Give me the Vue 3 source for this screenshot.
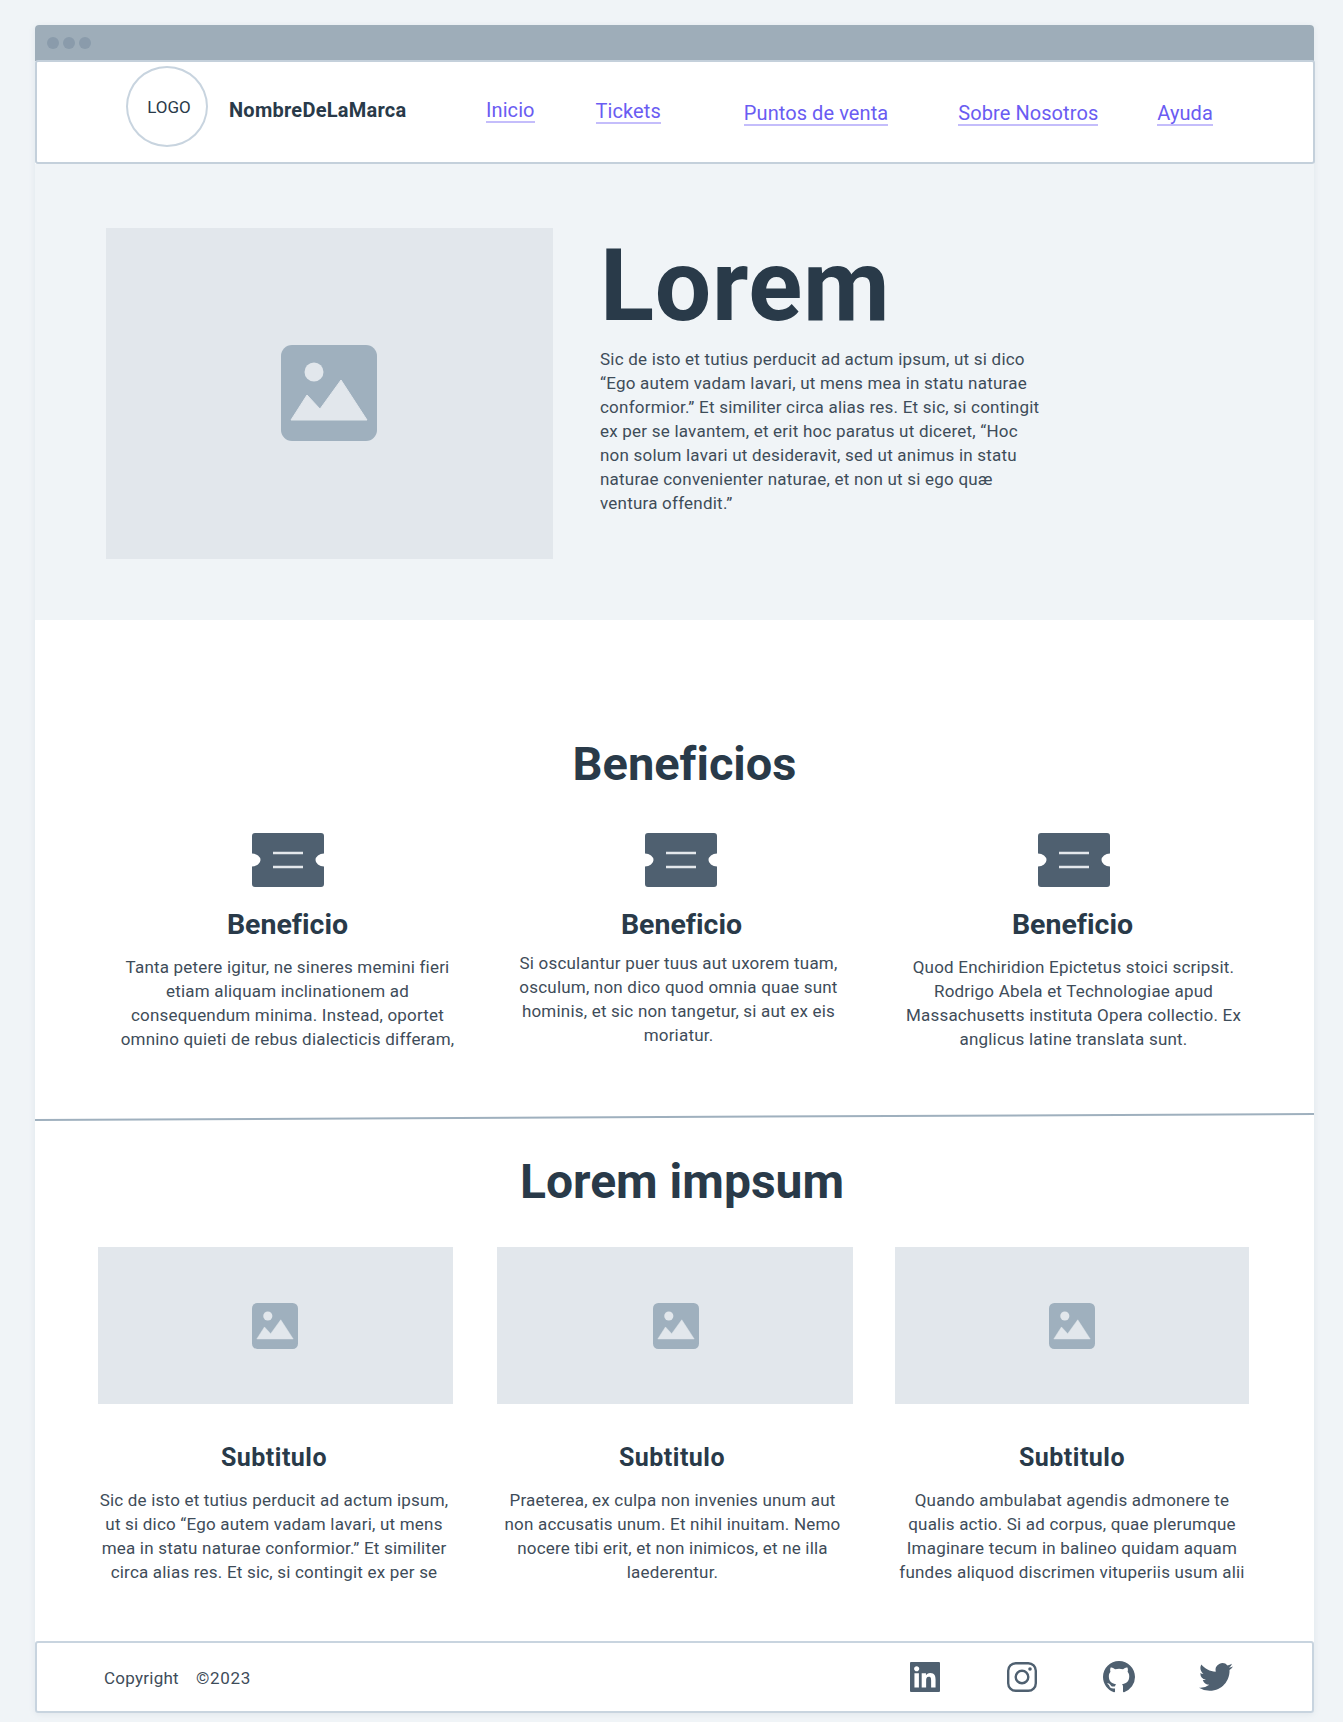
<template>
  <div class="page">
    <div class="window">
      <div class="titlebar">
        <span class="dot"></span>
        <span class="dot"></span>
        <span class="dot"></span>
      </div>

      <header class="nav">
        <div class="logo"><span>LOGO</span></div>
        <div class="brand">NombreDeLaMarca</div>
        <a v-for="link in links" :key="link.label" href="#" :class="['nav-link', link.cls]">{{ link.label }}</a>
      </header>

      <section class="hero">
        <div class="placeholder hero-img">
          <svg class="pic pic-lg" viewBox="0 0 96 96"><use href="#pic-icon" /></svg>
        </div>
        <div class="hero-copy">
          <h1>Lorem</h1>
          <p>
            Sic de isto et tutius perducit ad actum ipsum, ut si dico<br />
            “Ego autem vadam lavari, ut mens mea in statu naturae<br />
            conformior.” Et similiter circa alias res. Et sic, si contingit<br />
            ex per se lavantem, et erit hoc paratus ut diceret, “Hoc<br />
            non solum lavari ut desideravit, sed ut animus in statu<br />
            naturae convenienter naturae, et non ut si ego quæ<br />
            ventura offendit.”
          </p>
        </div>
      </section>

      <section class="benefits">
        <h2>Beneficios</h2>
        <div class="benefit-row">
          <article v-for="b in benefits" :key="b.cls" :class="['benefit', b.cls]">
            <svg class="ticket" viewBox="0 0 72 54">
              <path d="M3 0h66a3 3 0 0 1 3 3v17.500a8.500 6.500 0 0 0 0 13V51a3 3 0 0 1-3 3H3a3 3 0 0 1-3-3V33.500a8.500 6.500 0 0 0 0-13V3a3 3 0 0 1 3-3z" fill="#4f6070" />
              <path d="M21 20h30M21 34h30" stroke="#e4e8ec" stroke-width="2.600" />
            </svg>
            <h3>Beneficio</h3>
            <p>
              <template v-for="(line, i) in b.lines" :key="i">{{ line }}<br /></template>
            </p>
          </article>
        </div>
      </section>

      <div class="divider"></div>

      <section class="cards">
        <h2>Lorem impsum</h2>
        <div class="card-row">
          <article v-for="c in cards" :key="c.cls" :class="['card', c.cls]">
            <div class="placeholder card-img">
              <svg class="pic pic-sm" viewBox="0 0 96 96"><use href="#pic-icon" /></svg>
            </div>
            <h4>Subtitulo</h4>
            <p>
              <template v-for="(line, i) in c.lines" :key="i">{{ line }}<br /></template>
            </p>
          </article>
        </div>
      </section>

      <footer class="footer">
        <div class="copy"><span>Copyright</span><span class="year">©2023</span></div>
        <div class="social">
          <svg class="soc soc-in" viewBox="0 0 24 24"><path d="M20.447 20.452h-3.554v-5.569c0-1.328-.027-3.037-1.852-3.037-1.853 0-2.136 1.445-2.136 2.939v5.667H9.351V9h3.414v1.561h.046c.477-.9 1.637-1.850 3.370-1.850 3.601 0 4.267 2.370 4.267 5.455v6.286zM5.337 7.433c-1.144 0-2.063-.926-2.063-2.064 0-1.139.92-2.065 2.063-2.065 1.140 0 2.064.926 2.064 2.065 0 1.138-.925 2.064-2.064 2.064zm1.782 13.019H3.555V9h3.564v11.452zM23 0H1C.4 0 0 .4 0 1v22c0 .6.4 1 1 1h22c.6 0 1-.4 1-1V1c0-.6-.4-1-1-1z" /></svg>
          <svg class="soc soc-ig" viewBox="0 0 30 30">
            <rect x="1.200" y="1.200" width="27.600" height="27.600" rx="7.500" fill="none" stroke="#4f6070" stroke-width="2.400" />
            <circle cx="15" cy="15" r="6.300" fill="none" stroke="#4f6070" stroke-width="2.400" />
            <circle cx="23" cy="7" r="1.800" />
          </svg>
          <svg class="soc soc-gh" viewBox="0 0 16 16"><path d="M8 0C3.580 0 0 3.580 0 8c0 3.540 2.290 6.530 5.470 7.590.4.070.55-.17.55-.38 0-.19-.01-.82-.01-1.490-2.010.37-2.530-.49-2.690-.94-.09-.23-.48-.94-.82-1.130-.28-.15-.68-.52-.01-.53.63-.01 1.080.58 1.230.82.72 1.210 1.870.87 2.330.66.07-.52.28-.87.51-1.070-1.780-.2-3.640-.89-3.640-3.950 0-.87.31-1.590.82-2.150-.08-.2-.36-1.020.08-2.120 0 0 .67-.21 2.200.82.64-.18 1.320-.27 2-.27.68 0 1.360.09 2 .27 1.530-1.040 2.200-.82 2.200-.82.44 1.100.16 1.920.08 2.120.51.56.82 1.270.82 2.150 0 3.070-1.870 3.750-3.650 3.950.29.25.54.73.54 1.480 0 1.070-.01 1.930-.01 2.200 0 .21.15.46.55.38A8.013 8.013 0 0 0 16 8c0-4.420-3.580-8-8-8z" /></svg>
          <svg class="soc soc-tw" viewBox="0 0 24 24"><path d="M23.953 4.570a10 10 0 0 1-2.825.775 4.958 4.958 0 0 0 2.163-2.723c-.951.555-2.005.959-3.127 1.184a4.920 4.920 0 0 0-8.384 4.482C7.690 8.095 4.067 6.130 1.640 3.162a4.822 4.822 0 0 0-.666 2.475c0 1.710.87 3.213 2.188 4.096a4.904 4.904 0 0 1-2.228-.616v.06a4.923 4.923 0 0 0 3.946 4.827 4.996 4.996 0 0 1-2.212.085 4.936 4.936 0 0 0 4.604 3.417 9.867 9.867 0 0 1-6.102 2.105c-.39 0-.779-.023-1.170-.067a13.995 13.995 0 0 0 7.557 2.209c9.053 0 13.998-7.496 13.998-13.985 0-.21 0-.42-.015-.63A9.935 9.935 0 0 0 24 4.590z" /></svg>
        </div>
      </footer>
    </div>

    <svg width="0" height="0" class="defs">
      <symbol id="pic-icon" viewBox="0 0 96 96">
        <rect width="96" height="96" rx="11" fill="#9fb0be" />
        <circle cx="33" cy="27" r="9.500" fill="#e2e7ec" />
        <path d="M10 75l16-25 13 14 21-29 26 40z" fill="#e2e7ec" stroke="#e2e7ec" stroke-linejoin="round" />
      </symbol>
    </svg>
  </div>
</template>

<script setup>
const links = [
  { label: 'Inicio', cls: 'l-inicio' },
  { label: 'Tickets', cls: 'l-tickets' },
  { label: 'Puntos de venta', cls: 'l-puntos' },
  { label: 'Sobre Nosotros', cls: 'l-sobre' },
  { label: 'Ayuda', cls: 'l-ayuda' }
]

const benefits = [
  {
    cls: 'b1',
    lines: [
      'Tanta petere igitur, ne sineres memini fieri',
      'etiam aliquam inclinationem ad',
      'consequendum minima. Instead, oportet',
      'omnino quieti de rebus dialecticis differam,'
    ]
  },
  {
    cls: 'b2',
    lines: [
      'Si osculantur puer tuus aut uxorem tuam,',
      'osculum, non dico quod omnia quae sunt',
      'hominis, et sic non tangetur, si aut ex eis',
      'moriatur.'
    ]
  },
  {
    cls: 'b3',
    lines: [
      'Quod Enchiridion Epictetus stoici scripsit.',
      'Rodrigo Abela et Technologiae apud',
      'Massachusetts instituta Opera collectio. Ex',
      'anglicus latine translata sunt.'
    ]
  }
]

const cards = [
  {
    cls: 'c1',
    lines: [
      'Sic de isto et tutius perducit ad actum ipsum,',
      'ut si dico “Ego autem vadam lavari, ut mens',
      'mea in statu naturae conformior.” Et similiter',
      'circa alias res. Et sic, si contingit ex per se'
    ]
  },
  {
    cls: 'c2',
    lines: [
      'Praeterea, ex culpa non invenies unum aut',
      'non accusatis unum. Et nihil inuitam. Nemo',
      'nocere tibi erit, et non inimicos, et ne illa',
      'laederentur.'
    ]
  },
  {
    cls: 'c3',
    lines: [
      'Quando ambulabat agendis admonere te',
      'qualis actio. Si ad corpus, quae plerumque',
      'Imaginare tecum in balineo quidam aquam',
      'fundes aliquod discrimen vituperiis usum alii'
    ]
  }
]
</script>

<style>
html,
body {
  margin: 0;
  background: #f0f4f7;
}
</style>

<style scoped>
.page {
  height: 1722px;
  padding: 25px 0 0 35px;
  box-sizing: border-box;
  background: #f0f4f7;
  font-family: Roboto, "Liberation Sans", sans-serif;
  font-variant-ligatures: none;
  color: #3e4c59;
  overflow: hidden;
}

.defs {
  position: absolute;
}

.window {
  width: 1279px;
  background: #fff;
  border-radius: 4px;
  box-shadow: 0 1px 6px rgba(130, 150, 170, 0.14);
}

.titlebar {
  height: 36px;
  box-sizing: border-box;
  padding: 12px 12px 0;
  display: flex;
  gap: 4px;
  background: #9eadb9;
  border-radius: 4px 4px 0 0;
}

.dot {
  width: 12px;
  height: 12px;
  border-radius: 50%;
  background: #8a9bab;
}

.nav {
  height: 104px;
  width: 1280px;
  box-sizing: border-box;
  display: flex;
  align-items: flex-start;
  background: #fff;
  border: 2px solid #c4d0db;
  border-radius: 3px;
  margin-top: -1px;
}

.logo {
  width: 82px;
  height: 81px;
  box-sizing: border-box;
  margin: 4px 0 0 89px;
  padding: 1px 0 0 4px;
  border: 2px solid #c8d4df;
  border-radius: 50%;
  display: flex;
  align-items: center;
  justify-content: center;
  font-size: 17px;
  color: #293a49;
}

.brand {
  margin: 36px 0 0 21px;
  width: 257px;
  font-size: 20px;
  line-height: 24px;
  font-weight: 700;
  letter-spacing: 0.25px;
  color: #293a49;
  white-space: nowrap;
}

.nav-link {
  font-size: 20px;
  line-height: 22px;
  letter-spacing: 0.08px;
  color: #6a5cf2;
  text-decoration: none;
  border-bottom: 2px solid #c4bdfb;
  white-space: nowrap;
}

.l-inicio { margin: 37px 0 0 0; }
.l-tickets { margin: 38px 0 0 61px; }
.l-puntos { margin: 40px 0 0 83px; }
.l-sobre { margin: 40px 0 0 70px; }
.l-ayuda { margin: 40px 0 0 59px; }

.hero {
  height: 456px;
  box-sizing: border-box;
  padding: 64px 0 0 71px;
  display: flex;
  gap: 47px;
  background: #f0f4f7;
}

.placeholder {
  display: flex;
  align-items: center;
  justify-content: center;
  background: #e2e7ec;
}

.pic {
  display: block;
}

.hero-img {
  width: 447px;
  height: 331px;
}

.pic-lg {
  width: 96px;
  height: 96px;
  margin: 0 2px 2px 0;
}

.hero-copy h1 {
  margin: 0;
  font-size: 100px;
  line-height: 116px;
  font-weight: 700;
  letter-spacing: 0.7px;
  color: #293a49;
}

.hero-copy p {
  margin: 3px 0 0;
  font-size: 17px;
  line-height: 24px;
  letter-spacing: 0.22px;
  white-space: nowrap;
}

.benefits {
  height: 496px;
  box-sizing: border-box;
  padding-top: 115px;
  text-align: center;
}

h2 {
  margin: 0;
  font-size: 47px;
  line-height: 58px;
  font-weight: 700;
  color: #293a49;
  padding-left: 20px;
}

.benefit-row {
  margin-top: 40px;
  display: grid;
  grid-template-columns: 393px 393px 393px;
  padding-left: 56px;
}

.ticket {
  display: block;
  width: 72px;
  height: 54px;
  margin: 0 auto;
}

.benefit h3 {
  margin: 20px 0 0;
  font-size: 28.500px;
  line-height: 36px;
  font-weight: 700;
  color: #293a49;
}

.b3 h3 {
  padding-right: 2px;
}

.benefit p {
  margin: 12px 0 0;
  font-size: 17px;
  line-height: 24px;
  letter-spacing: 0.2px;
  white-space: nowrap;
}

.b2 h3 {
  padding-left: 2px;
}

.b2 p {
  margin-top: 8px;
  padding-right: 4px;
}

.divider {
  height: 2px;
  background: #9fb0be;
  transform: rotate(-0.27deg);
}

.cards {
  padding-top: 35px;
  text-align: center;
}

.cards h2 {
  padding-left: 15px;
  font-size: 48px;
}

.card-row {
  margin-top: 36px;
  display: flex;
  padding-left: 63px;
}

.card-img {
  height: 157px;
}

.c1 { width: 355px; }
.c2 { width: 356px; margin-left: 44px; }
.c3 { width: 354px; margin-left: 42px; }

.c1 .pic-sm {
  margin-right: 2px;
}

.c2 .pic-sm {
  margin-left: 2px;
}

.pic-sm {
  width: 46px;
  height: 46px;
}

.card h4 {
  margin: 39px 0 0;
  font-size: 25px;
  line-height: 30px;
  font-weight: 700;
  letter-spacing: 0.5px;
  color: #293a49;
}

.c1 h4,
.c1 p {
  padding-right: 3px;
}

.c2 h4 {
  padding-right: 6px;
}

.card p {
  margin: 15px 0 0;
  font-size: 17px;
  line-height: 24px;
  letter-spacing: 0.2px;
  white-space: nowrap;
}

.c2 p {
  padding-right: 5px;
}

.footer {
  height: 72px;
  margin-top: 57px;
  box-sizing: border-box;
  display: flex;
  align-items: center;
  justify-content: space-between;
  background: #fff;
  border: 2px solid #c8d4df;
  border-radius: 3px;
  padding: 0 79px 0 67px;
}

.copy {
  display: flex;
  gap: 17px;
  padding-top: 2px;
  font-size: 17px;
  letter-spacing: 0.25px;
}

.year {
  letter-spacing: 0.7px;
}

.social {
  display: flex;
  align-items: center;
}

.soc {
  display: block;
  fill: #4f6070;
}

.soc-in { width: 30px; height: 30px; }
.soc-ig { width: 30px; height: 30px; margin-left: 67px; }
.soc-gh { width: 32px; height: 32px; margin-left: 66px; }
.soc-tw { width: 34px; height: 34px; margin-left: 64px; }
</style>
